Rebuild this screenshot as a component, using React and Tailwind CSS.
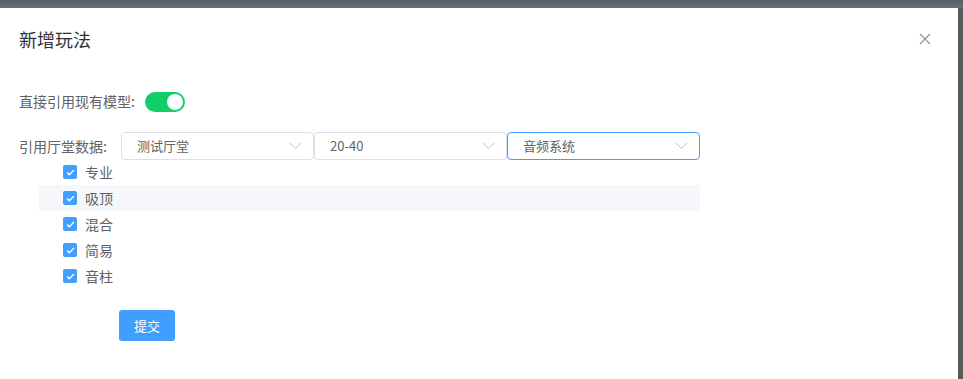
import React, { useState } from 'react';

const font = { fontFamily: '"Noto Sans CJK SC", "Liberation Sans", sans-serif' };

function Chevron() {
  return (
    <svg width="13" height="8" viewBox="0 0 13 8" fill="none" className="shrink-0">
      <path d="M1 1l5.5 5.5L12 1" stroke="#c0c4cc" strokeWidth="1" />
    </svg>
  );
}

function Select({ value, active }) {
  return (
    <div
      className={`flex h-[28px] w-[193px] items-center justify-between rounded-[4px] border bg-white pl-[15px] pr-[11px] text-[13px] text-[#606266] ${
        active ? 'border-[#409eff]' : 'border-[#dcdfe6]'
      }`}
    >
      <span>{value}</span>
      <Chevron />
    </div>
  );
}

function Check({ label, hover }) {
  return (
    <div className={`flex h-[26px] items-center pl-[24px] ${hover ? 'bg-[#f5f7fa]' : ''}`}>
      <span className="flex h-[14px] w-[14px] items-center justify-center rounded-[2px] bg-[#409eff]">
        <svg width="9" height="7" viewBox="0 0 9 7" fill="none">
          <path d="M1 3.5l2.3 2.3L8 1" stroke="#fff" strokeWidth="1.3" />
        </svg>
      </span>
      <span className="ml-[8px] text-[14px] text-[#606266]">{label}</span>
    </div>
  );
}

export default function App() {
  const [on, setOn] = useState(true);
  const items = ['专业', '吸顶', '混合', '简易', '音柱'];

  return (
    <div className="flex h-[379px] w-[963px] flex-col overflow-hidden bg-[#5c5f66]" style={font}>
      <div className="h-[8px] shrink-0 bg-gradient-to-b from-[#575b63] to-[#6b6f78]" />
      <div className="flex flex-1">
        <div className="relative w-[958px] bg-white">
          <div className="flex items-center justify-between pl-[19px] pr-[27px] pt-[19px]">
            <h2 className="text-[18px] leading-[24px] text-[#303133]">新增玩法</h2>
            <svg width="12" height="12" viewBox="0 0 12 12" fill="none">
              <path d="M1 1l10 10M11 1L1 11" stroke="#909399" strokeWidth="1.2" />
            </svg>
          </div>

          <div className="mt-[40px] flex items-center pl-[19px]">
            <span className="text-[14px] text-[#606266]">直接引用现有模型:</span>
            <button
              onClick={() => setOn(!on)}
              className={`ml-[10px] flex h-[20px] w-[40px] items-center rounded-full px-[2px] ${
                on ? 'justify-end bg-[#13ce66]' : 'justify-start bg-[#dcdfe6]'
              }`}
            >
              <span className="h-[16px] w-[16px] rounded-full bg-white" />
            </button>
          </div>

          <div className="mt-[20px] flex items-center pl-[19px]">
            <span className="w-[102px] text-[14px] text-[#606266]">引用厅堂数据:</span>
            <Select value="测试厅堂" />
            <Select value="20-40" />
            <Select value="音频系统" active />
          </div>

          <div className="-mt-[1px] ml-[39px] w-[661px]">
            {items.map((t, i) => (
              <Check key={t} label={t} hover={i === 1} />
            ))}
          </div>

          <div className="mt-[21px] pl-[119px]">
            <button className="h-[31px] w-[56px] rounded-[3px] bg-[#409eff] text-[13px] text-white">提交</button>
          </div>
        </div>
        <div className="flex-1 bg-[#5a5a5a]" />
      </div>
    </div>
  );
}
